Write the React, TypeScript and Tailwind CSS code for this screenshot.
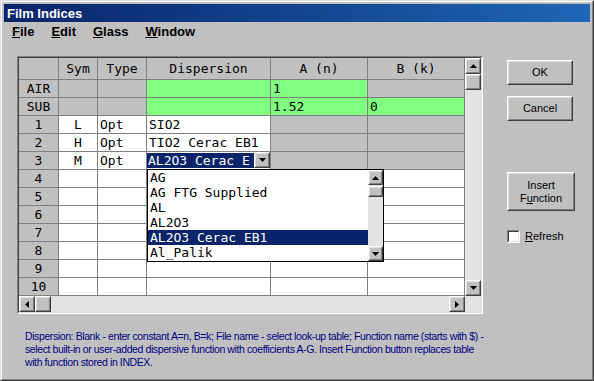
import React from 'react';

const mono = "font-['DejaVu_Sans_Mono',monospace] text-[13px]";
const ui = "font-['Liberation_Sans',Arial,sans-serif]";

type Cell = { text?: string; bg: string; align?: 'c' | 'l' };

const G = 'bg-[#c0c0c0]';
const W = 'bg-white';
const N = 'bg-[#80ff80]';

// 표 데이터
const rows: { label: string; cells: Cell[] }[] = [
  { label: 'AIR', cells: [{ bg: G }, { bg: G }, { bg: N }, { bg: N, text: '1' }, { bg: G }] },
  { label: 'SUB', cells: [{ bg: G }, { bg: G }, { bg: N }, { bg: N, text: '1.52' }, { bg: N, text: '0' }] },
  { label: '1', cells: [{ bg: W, text: 'L', align: 'c' }, { bg: W, text: 'Opt' }, { bg: W, text: 'SIO2' }, { bg: G }, { bg: G }] },
  { label: '2', cells: [{ bg: W, text: 'H', align: 'c' }, { bg: W, text: 'Opt' }, { bg: W, text: 'TIO2 Cerac EB1' }, { bg: G }, { bg: G }] },
  { label: '3', cells: [{ bg: W, text: 'M', align: 'c' }, { bg: W, text: 'Opt' }, { bg: W, text: '__combo__' }, { bg: G }, { bg: G }] },
  ...['4', '5', '6', '7', '8', '9', '10'].map((l) => ({
    label: l,
    cells: [{ bg: W }, { bg: W }, { bg: W }, { bg: W }, { bg: W }] as Cell[],
  })),
];

const listItems = ['AG', 'AG FTG Supplied', 'AL', 'AL2O3', 'AL2O3 Cerac EB1', 'Al_Palik'];

function Arrow({ dir }: { dir: 'up' | 'down' | 'left' | 'right' }) {
  const pts = {
    up: '0,4 7,4 3.5,0',
    down: '0,0 7,0 3.5,4',
    left: '4,0 4,7 0,3.5',
    right: '0,0 0,7 4,3.5',
  }[dir];
  const vertical = dir === 'up' || dir === 'down';
  return (
    <svg width={vertical ? 7 : 4} height={vertical ? 4 : 7} viewBox={vertical ? '0 0 7 4' : '0 0 4 7'}>
      <polygon points={pts} fill="#000" />
    </svg>
  );
}

// 입체 버튼 테두리
function Raised({ className = '', children }: { className?: string; children?: React.ReactNode }) {
  return (
    <div className={`border border-t-white border-l-white border-r-[#404040] border-b-[#404040] ${className}`}>
      <div className="w-full h-full border border-t-[#dfdfdf] border-l-[#dfdfdf] border-r-[#808080] border-b-[#808080] bg-[#c0c0c0] flex items-center justify-center">
        {children}
      </div>
    </div>
  );
}

function Button({ className = '', children }: { className?: string; children: React.ReactNode }) {
  return (
    <Raised className={className}>
      <div className={`${ui} text-[11px] text-black leading-[13px] text-center`}>{children}</div>
    </Raised>
  );
}

export default function App() {
  return (
    <div className="w-[594px] h-[381px] bg-[#c0c0c0] border border-t-[#dfdfdf] border-l-[#dfdfdf] border-r-[#404040] border-b-[#404040]">
      <div className="w-full h-full border border-t-white border-l-white border-r-[#808080] border-b-[#808080] p-[2px] flex flex-col">
        {/* 타이틀 바 */}
        <div className="h-[18px] bg-linear-to-r from-[#0a246a] to-[#1f66b6] flex items-center pl-[3px]">
          <span className={`${ui} text-[13px] font-bold text-white leading-none`}>Film Indices</span>
        </div>

        {/* 메뉴 */}
        <div className={`${ui} h-[19px] flex items-center gap-[17px] pl-[8px] text-[13px] font-bold text-black`}>
          <span><span className="underline">F</span>ile</span>
          <span><span className="underline">E</span>dit</span>
          <span><span className="underline">G</span>lass</span>
          <span><span className="underline">W</span>indow</span>
        </div>

        <div className="flex pt-[15px] pl-[13px]">
          {/* 표 프레임 */}
          <div className="w-[466px] h-[258px] border border-t-[#808080] border-l-[#808080] border-r-white border-b-white">
            <div className="w-full h-full border border-t-[#404040] border-l-[#404040] border-r-[#dfdfdf] border-b-[#dfdfdf] flex flex-col">
              <div className="flex">
                <div className={`relative w-[446px] grid grid-cols-[40px_39px_49px_124px_97px_97px] ${mono} text-black`}>
                  {['', 'Sym', 'Type', 'Dispersion', 'A (n)', 'B (k)'].map((h, i) => (
                    <div
                      key={i}
                      className="h-[22px] bg-[#c0c0c0] border-r border-b border-[#808080] flex items-center justify-center leading-none"
                    >
                      {h}
                    </div>
                  ))}
                  {rows.map((r) => (
                    <React.Fragment key={r.label}>
                      <div className="h-[18px] bg-[#c0c0c0] border-r border-b border-[#808080] flex items-center justify-center leading-none">
                        {r.label}
                      </div>
                      {r.cells.map((c, i) =>
                        c.text === '__combo__' ? (
                          <div key={i} className="h-[18px] bg-white border-r border-b border-[#808080] flex pt-[1px] pb-[1px]">
                            <div className="flex-1 bg-[#0a246a] text-white flex items-center pl-[1px] leading-none whitespace-nowrap">
                              AL2O3 Cerac E
                            </div>
                            <Raised className="w-[16px] h-[16px] -mt-[1px]">
                              <Arrow dir="down" />
                            </Raised>
                          </div>
                        ) : (
                          <div
                            key={i}
                            className={`h-[18px] ${c.bg} border-r border-b border-[#808080] flex items-center leading-none whitespace-nowrap overflow-hidden ${
                              c.align === 'c' ? 'justify-center' : 'pl-[2px]'
                            }`}
                          >
                            {c.text}
                          </div>
                        )
                      )}
                    </React.Fragment>
                  ))}

                  {/* 드롭다운 목록 */}
                  <div className="absolute left-[128px] top-[111px] w-[237px] h-[93px] bg-white border border-black flex">
                    <div className="flex-1 flex flex-col">
                      {listItems.map((it) => (
                        <div
                          key={it}
                          className={`h-[15px] flex items-center pl-[2px] leading-none whitespace-nowrap ${
                            it === 'AL2O3 Cerac EB1' ? 'bg-[#0a246a] text-white' : ''
                          }`}
                        >
                          {it}
                        </div>
                      ))}
                    </div>
                    <div className="w-[15px] bg-[#e3e3e3] flex flex-col">
                      <Raised className="h-[15px]">
                        <Arrow dir="up" />
                      </Raised>
                      <Raised className="h-[11px] mt-[1px]" />
                      <div className="flex-1" />
                      <Raised className="h-[15px]">
                        <Arrow dir="down" />
                      </Raised>
                    </div>
                  </div>
                </div>

                {/* 세로 스크롤바 */}
                <div className="w-[16px] h-[238px] bg-[#e3e3e3] flex flex-col">
                  <Raised className="h-[16px]">
                    <Arrow dir="up" />
                  </Raised>
                  <Raised className="h-[16px]" />
                  <div className="flex-1" />
                  <Raised className="h-[16px]">
                    <Arrow dir="down" />
                  </Raised>
                </div>
              </div>

              {/* 가로 스크롤바 */}
              <div className="flex h-[16px] bg-[#e3e3e3]">
                <div className="w-[446px] flex">
                  <Raised className="w-[16px]">
                    <Arrow dir="left" />
                  </Raised>
                  <Raised className="w-[16px]" />
                  <div className="flex-1" />
                  <Raised className="w-[16px]">
                    <Arrow dir="right" />
                  </Raised>
                </div>
                <div className="w-[16px]" />
              </div>
            </div>
          </div>

          {/* 오른쪽 버튼 */}
          <div className="ml-[24px] pt-[4px] flex flex-col">
            <Button className="w-[66px] h-[25px]">OK</Button>
            <Button className="w-[66px] h-[25px] mt-[11px]">Cancel</Button>
            <Button className="w-[68px] h-[39px] mt-[51px]">
              Insert
              <br />
              F<span className="underline">u</span>nction
            </Button>
            <label className={`${ui} text-[11px] text-black flex items-center gap-[5px] mt-[17px]`}>
              <span className="w-[13px] h-[13px] bg-white border border-t-[#808080] border-l-[#808080] border-r-white border-b-white">
                <span className="block w-full h-full border border-t-[#404040] border-l-[#404040] border-r-[#dfdfdf] border-b-[#dfdfdf]" />
              </span>
              <span><span className="underline">R</span>efresh</span>
            </label>
          </div>
        </div>

        {/* 설명 */}
        <div className={`${ui} text-[10.5px] leading-[13px] text-[#000080] pl-[21px] mt-[16px] whitespace-nowrap tracking-[-0.4px]`}>
          <div>Dispersion: Blank - enter constant A=n, B=k; File name - select look-up table; Function name (starts with $) -</div>
          <div>select built-in or user-added dispersive function with coefficients A-G. Insert Function button replaces table</div>
          <div>with function stored in INDEX.</div>
        </div>
      </div>
    </div>
  );
}
